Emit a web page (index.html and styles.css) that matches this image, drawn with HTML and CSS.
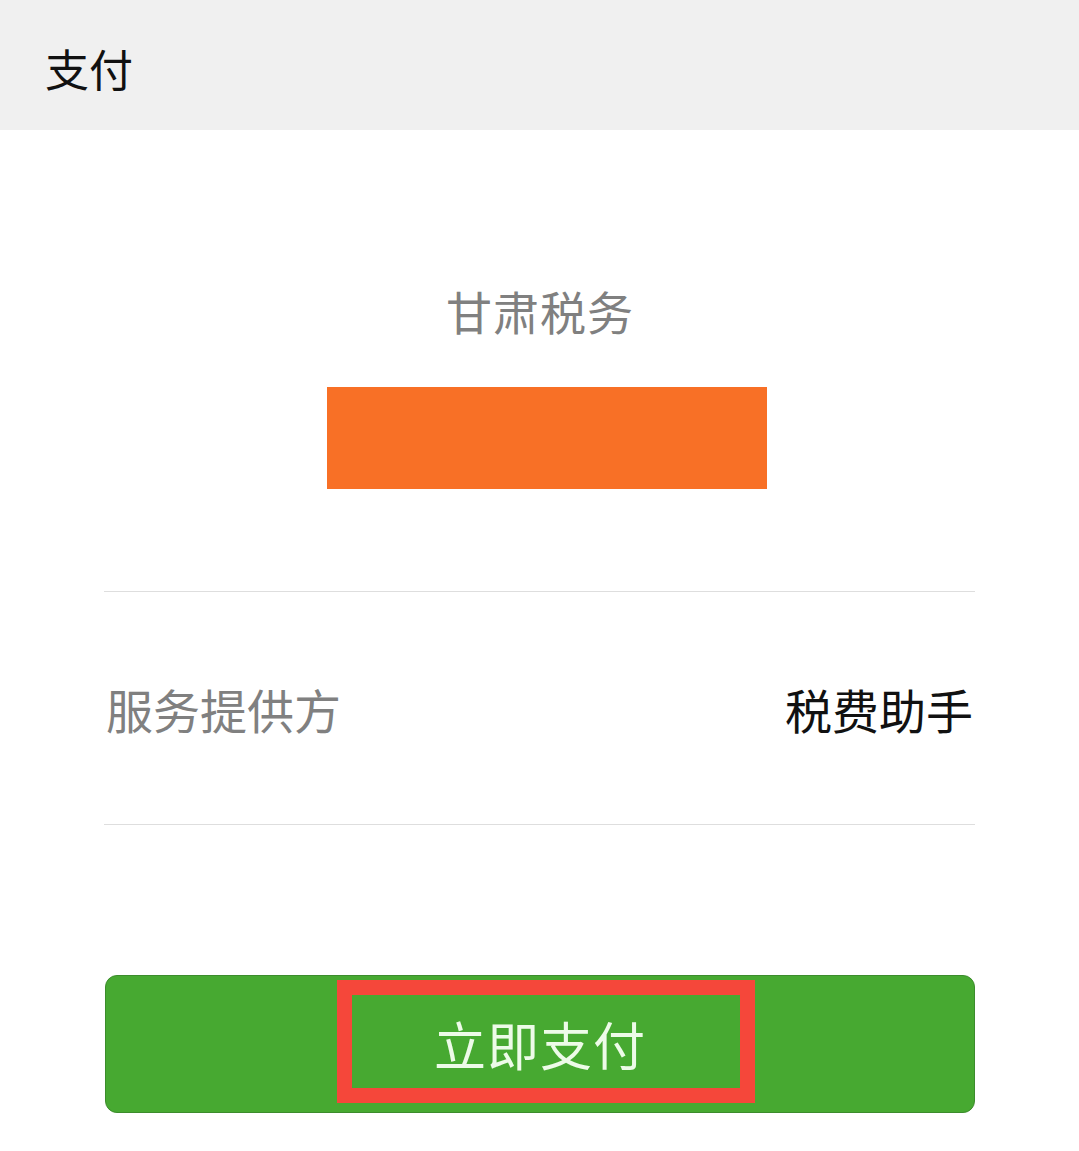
FILE: index.html
```html
<!DOCTYPE html>
<html lang="zh-CN">
<head>
<meta charset="utf-8">
<title>支付</title>
<link rel="stylesheet" href="styles.css">
</head>
<body>
<header class="topbar"><span class="topbar-title">支付</span></header>
<main class="content">
  <h1 class="merchant">甘肃税务</h1>
  <div class="redacted"></div>
  <div class="divider"></div>
  <div class="info-row">
    <span class="info-label">服务提供方</span>
    <span class="info-value">税费助手</span>
  </div>
  <div class="divider"></div>
  <button class="pay-btn" type="button">立即支付<span class="highlight"></span></button>
</main>
</body>
</html>
```
FILE: styles.css
```css
html, body {
  margin: 0;
  padding: 0;
  background: #ffffff;
  font-family: "Noto Sans CJK SC", "Noto Sans", sans-serif;
}
.topbar {
  height: 130px;
  background: #f0f0f0;
  display: flex;
  align-items: center;
  padding: 5px 0 0 45px;
  box-sizing: border-box;
}
.topbar-title {
  font-size: 44px;
  line-height: 1;
  color: #111111;
}
.content {
  margin: 0 104px 0 105px;
  display: flex;
  flex-direction: column;
}
.merchant {
  margin: 157px 0 0;
  font-size: 46px;
  line-height: 46px;
  font-weight: normal;
  color: #808080;
  text-align: center;
  letter-spacing: 1px;
}
.redacted {
  margin: 54px 0 0 222px;
  width: 440px;
  height: 102px;
  background: #f87026;
}
.divider {
  height: 1px;
  background: #dedede;
  margin-left: -1px;
}
.redacted + .divider {
  margin-top: 102px;
}
.info-row {
  height: 232px;
  display: flex;
  align-items: center;
  justify-content: space-between;
  padding: 0 2px 0 1px;
  font-size: 47px;
  line-height: 1;
}
.info-label {
  color: #808080;
}
.info-value {
  color: #111111;
}
.pay-btn {
  position: relative;
  margin-top: 150px;
  height: 138px;
  width: 100%;
  background: #47a931;
  border: 1px solid #3c8c2c;
  border-radius: 12px;
  color: #edfbe8;
  font-family: "Noto Sans CJK SC", "Noto Sans", sans-serif;
  font-size: 52px;
  line-height: 1;
  padding: 0;
  letter-spacing: 1px;
}
.highlight {
  position: absolute;
  left: 231px;
  top: 4px;
  width: 418px;
  height: 123px;
  box-sizing: border-box;
  border: 15px solid #f5473a;
}
```
